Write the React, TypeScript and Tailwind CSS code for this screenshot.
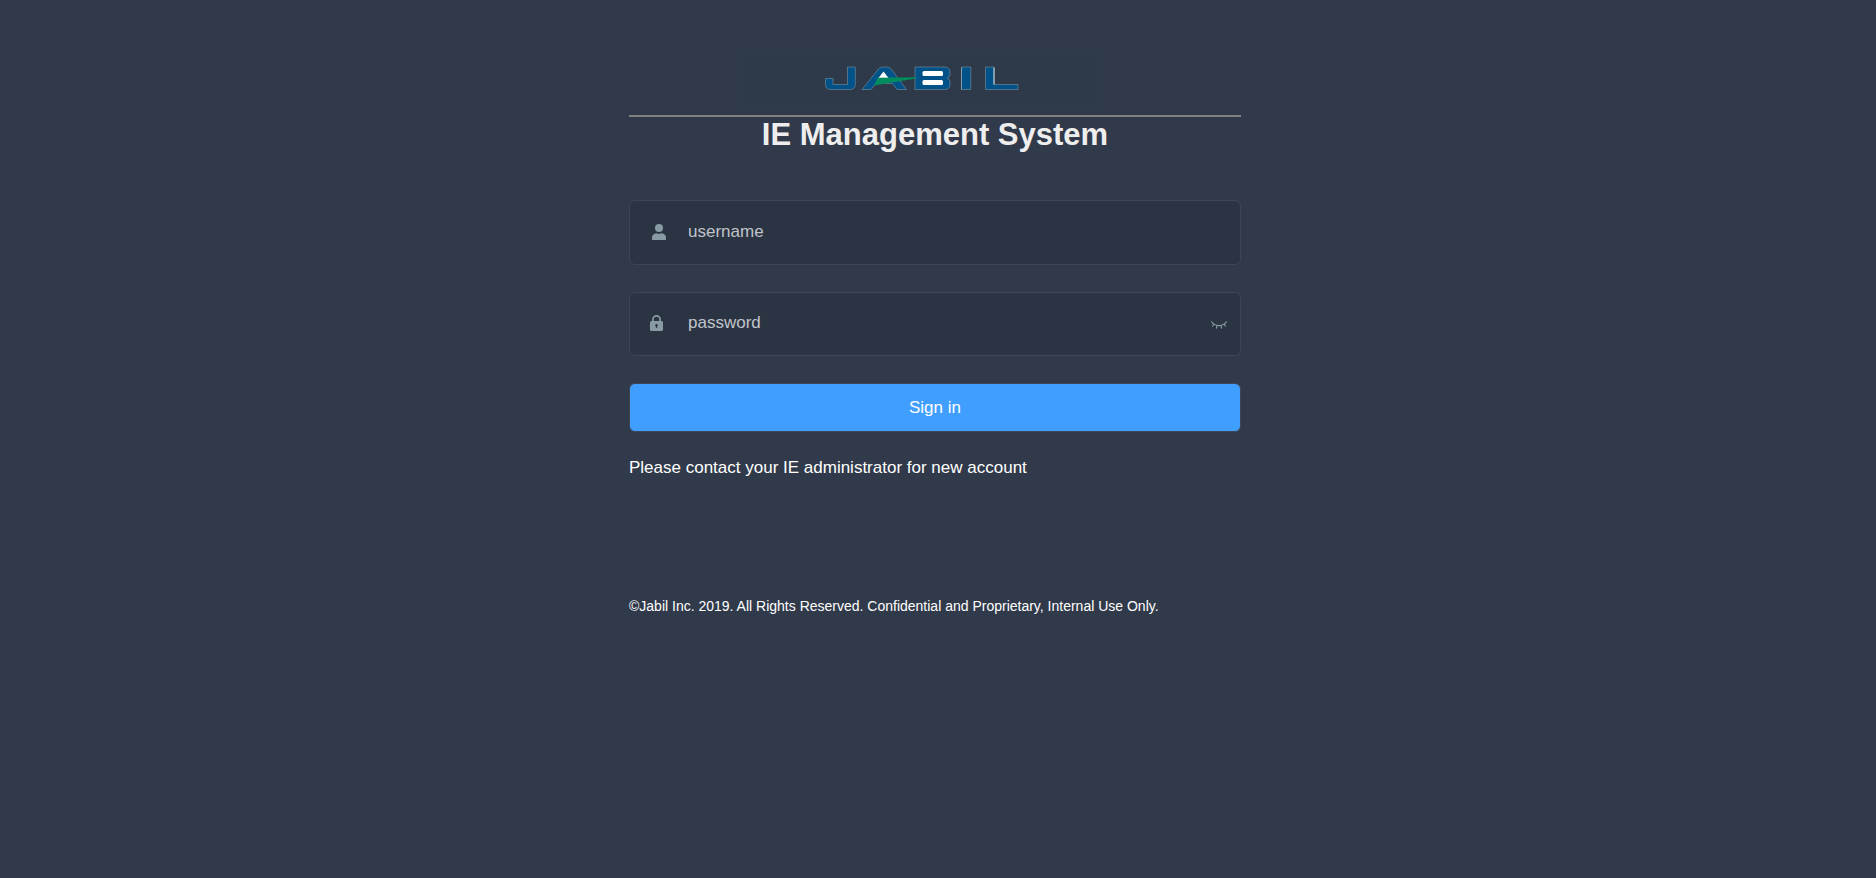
import React, { useState } from "react";

function JabilLogo() {
  return (
    <svg
      role="img"
      aria-label="Jabil"
      viewBox="738 50 360 60"
      className="h-[60px] w-[360px] bg-[#2e3a4a]"
    >
      <g fill="#005288" stroke="#6f8797" strokeWidth="0.7" strokeLinejoin="round">
        <path d="M847.500 67H855.300V84.500Q855.300 89.500 849.500 89.500H831Q825.500 89.500 825.500 84.500V78.500H833V84.500H847.500Z" />
        <path d="M862 89.500 878.500 69Q880 67 882.500 67H887Q889.500 67 891.200 69L906.500 89.500H897L892.500 83.500H876L871 89.500Z" />
        <path d="M915 67H944Q950 67 950 72V74.500Q950 77.500 947 78.200Q950 79 950 82V84.500Q950 89.500 944 89.500H915Z" />
        <path d="M961.500 67H970.800V89.500H961.500Z" />
        <path d="M985.500 67H994V84.500H1018V89.500H985.500Z" />
      </g>
      <path d="M994 67.500V84.500" fill="none" stroke="#d5dce0" strokeWidth="1" />
      <path d="M961.500 67.500V89.500" fill="none" stroke="#8a9dab" strokeWidth="1" />
      <path d="M883.500 71.500 888.500 78H878.500Z" fill="#fff" />
      <path d="M877.500 77.800 916 77.200V78.400L874 85.500Z" fill="#008c5c" />
      <rect x="922.500" y="71" width="20.500" height="5" rx="1.500" fill="#fff" />
      <rect x="922.500" y="80" width="20.500" height="5" rx="1.500" fill="#fff" />
    </svg>
  );
}

function UserIcon() {
  return (
    <svg aria-hidden="true" viewBox="0 0 14 16" className="h-4 w-[14px] fill-[#889aa4]">
      <circle cx="7" cy="4" r="4" />
      <path d="M0 15.500V13.500Q0 10 4.500 9.200Q7 10.200 9.500 9.200Q14 10 14 13.500V15.500Q14 16 13.500 16H.5Q0 16 0 15.500Z" />
    </svg>
  );
}

function LockIcon() {
  return (
    <svg aria-hidden="true" viewBox="0 0 13 16" className="h-4 w-[13px]">
      <path d="M2.900 7V4.300A3.600 3.500 0 0 1 10.100 4.300V7" fill="none" stroke="#889aa4" strokeWidth="1.700" />
      <rect y="6" width="13" height="10" rx="1.500" fill="#889aa4" />
      <path d="M6.500 9A1.400 1.400 0 0 1 7.100 11.600V13H5.900V11.600A1.400 1.400 0 0 1 6.500 9Z" fill="#2b3442" />
    </svg>
  );
}

function EyeIcon({ open }: { open: boolean }) {
  return (
    <svg aria-hidden="true" viewBox="0 0 16 8" className="h-2 w-4 fill-none stroke-[#889aa4]" strokeWidth="1.200" strokeLinecap="round">
      <path d="M.6.8Q3 4.600 8 4.600T15.400.8" />
      {open ? (
        <path d="M.6.8Q8-3 15.400.8" />
      ) : (
        <path d="M2.900 3.200 1.600 5M6 4.600 5.500 7.200M10 4.600 10.500 7.200M13.100 3.200 14.400 5" />
      )}
    </svg>
  );
}

const inputStyle =
  "min-w-0 flex-1 bg-transparent text-[17px] leading-6 text-gray-300 placeholder:text-[#c0c4cc] outline-none";

export default function App() {
  const [visible, setVisible] = useState(false);

  return (
    <main className="min-h-screen bg-[#313a4a] pt-[50px] pr-[22px] pb-12 pl-4 font-['Liberation_Sans',Arial,sans-serif] text-[17px] text-white">
      <form className="mx-auto w-full max-w-[612px]" onSubmit={(e) => e.preventDefault()}>
        <div className="flex justify-center border-b-2 border-[#808080] pr-[34px] pb-[5px]">
          <JabilLogo />
        </div>
        <h1 className="text-center text-[31px] leading-9 font-bold text-[#eeeeee]">
          IE Management System
        </h1>

        <div className="mt-[47px] flex h-[65px] items-center rounded-md border border-[#3e4656] bg-[#2b3442] pr-3 pb-[2px] pl-[22px]">
          <label htmlFor="username" className="w-[36px]" aria-label="Username">
            <UserIcon />
          </label>
          <input id="username" name="username" type="text" placeholder="username" className={inputStyle} />
        </div>

        <div className="mt-[27px] flex h-16 items-center rounded-md border border-[#3e4656] bg-[#2b3442] pr-[13px] pb-[2px] pl-5">
          <label htmlFor="password" className="w-[38px]" aria-label="Password">
            <LockIcon />
          </label>
          <input
            id="password"
            name="password"
            type={visible ? "text" : "password"}
            placeholder="password"
            className={inputStyle}
          />
          <button type="button" aria-label="Show password" className="pt-1" onClick={() => setVisible(!visible)}>
            <EyeIcon open={visible} />
          </button>
        </div>

        <button
          type="submit"
          className="mt-[27px] h-[49px] w-full rounded-md border border-[#3e4656] bg-[#409eff] text-[17px] text-white"
        >
          Sign in
        </button>

        <p className="mt-6 leading-6">Please contact your IE administrator for new account</p>
        <p className="mt-[116px] text-sm">
          ©Jabil Inc. 2019. All Rights Reserved. Confidential and Proprietary, Internal Use Only.
        </p>
      </form>
    </main>
  );
}
